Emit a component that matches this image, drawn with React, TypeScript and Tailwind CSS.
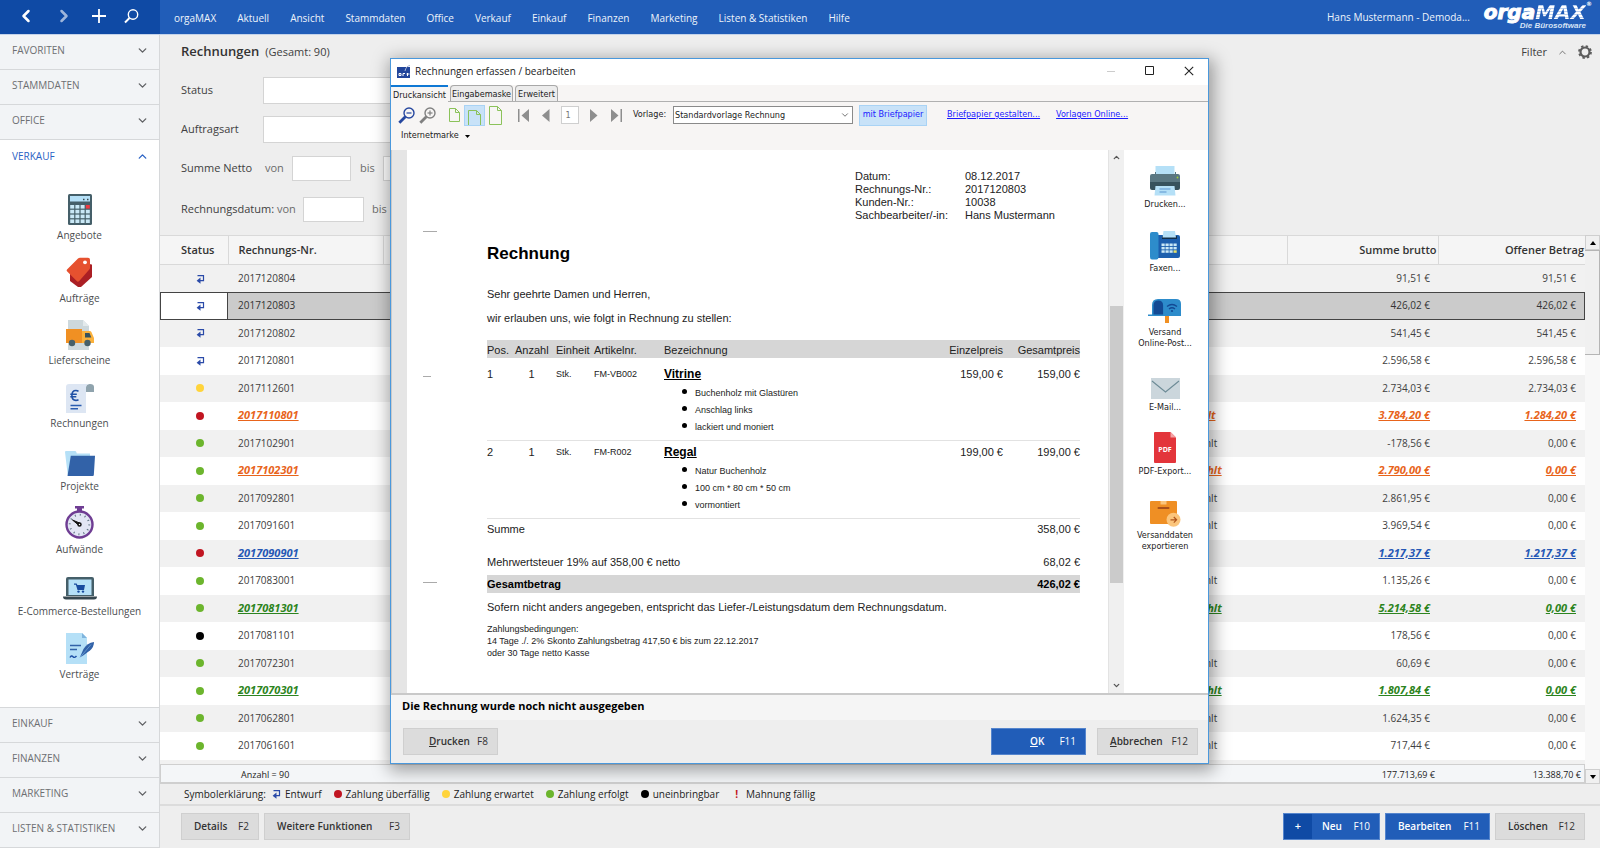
import type { ReactNode } from "react";
import { ChevronDown, ChevronLeft, ChevronRight, ChevronUp } from "lucide-react";

/* ---------- Sidebar icons ---------- */

const Calculator = () => (
  <svg width="24" height="31" viewBox="0 0 24 31" aria-hidden="true">
    <rect width="24" height="31" rx="1.5" fill="#455f69" />
    <rect x="2" y="2" width="20" height="5.500" fill="#b5e0f7" />
    <path d="M15 5.500h1.500M19 5.500h1.500" stroke="#37474f" strokeWidth="1.400" />
    {[11, 15.8, 20.6, 25.4].map((y, r) =>
      [2.2, 7.4, 12.6, 17.8].map((x, c) => (
        <rect key={x + "-" + y} x={x} y={y} width="4" height="3.600" fill={r === 0 && c === 3 ? "#ee3b43" : "#c9e8f6"} />
      )),
    )}
  </svg>
);

const Tag = () => (
  <svg width="27" height="31" viewBox="0 0 27 31" aria-hidden="true">
    <path d="M25 7l1 1v12L15 30h-3L4 24V17z" fill="#ab1f24" />
    <path d="M1 12.500L12 1.500q.8-.7 2-.7h8q2 0 2 2v8q0 1-.7 1.800L13 24.300q-1.200 1-2.300-.2L1 14.300q-.8-.9 0-1.800z" fill="#e6512f" />
    <circle cx="19" cy="5.300" r="1.900" fill="#fff" />
  </svg>
);

const Truck = () => (
  <svg width="28" height="30" viewBox="0 0 28 30" aria-hidden="true">
    <path d="M2 0h15l6 6v24H2z" fill="#cdd8dc" />
    <path d="M17 0l6 6h-6z" fill="#e3eaec" />
    <path d="M0 9h16v14H0z" fill="#f09023" />
    <path d="M16 11h7.500q1.500 0 2 1.300L28 18v5H16z" fill="#fbb13c" />
    <path d="M19 13h4.500l1.800 4.500H19z" fill="#37525d" />
    <circle cx="6" cy="23" r="3.200" fill="#455f69" />
    <circle cx="21.500" cy="23" r="3.200" fill="#455f69" />
  </svg>
);

const Invoice = () => (
  <svg width="28" height="29" viewBox="0 0 28 29" aria-hidden="true">
    <path d="M20 3q0-3 4-3t4 3v5h-8z" fill="#8fa3ad" />
    <path d="M3 0h20q-3 .5-3 4v25H0V3q0-3 3-3z" fill="#dde6f3" />
    <path d="M12.500 7.300q-1-.8-2.600-.8c-2.800 0-4 2.200-4 5s1.300 4.900 4 4.900q1.600 0 2.600-.8M4.300 10.300h6.500M4.300 12.800h6" fill="none" stroke="#1f50a5" strokeWidth="1.600" />
    <path d="M4.500 21.500h11M4.500 24.800h7.500" stroke="#2a5db0" strokeWidth="1.500" />
  </svg>
);

const Folder = () => (
  <svg width="30" height="25" viewBox="0 0 30 25" aria-hidden="true">
    <path d="M0 1q0-1 1-1h9q1 0 1.300 1l.5 1.500H25V8L5 24H3.500q-.8 0-.9-1z" fill="#b5e0f7" />
    <path d="M5.800 4.800H30L28.800 24q-.1 1-1 1H2.500z" fill="#3262a8" />
  </svg>
);

const Stopwatch = () => (
  <svg width="29" height="33" viewBox="0 0 29 33" aria-hidden="true">
    <path d="M10 0h9v2.500h-2V5h-5V2.500h-2z" fill="#6f3d93" />
    <circle cx="14.500" cy="18.500" r="13" fill="#e2e6f4" stroke="#6f3d93" strokeWidth="2.400" />
    <circle cx="14.500" cy="18.500" r="9.700" fill="none" stroke="#5e7380" strokeWidth="2" strokeDasharray="1 4.079" />
    <path d="M7.500 14l7.500 3.200-1.300 2z" fill="#111" stroke="#111" />
    <circle cx="14.500" cy="18.500" r="1.500" fill="#fff" stroke="#111" strokeWidth="1.500" />
  </svg>
);

const Laptop = () => (
  <svg width="34" height="24" viewBox="0 0 34 24" aria-hidden="true">
    <path d="M3 2q0-2 2-2h24q2 0 2 2v17H3z" fill="#455f69" />
    <rect x="5.500" y="2.500" width="23" height="15.500" fill="#b5e0f7" />
    <path d="M0 19.500h34q0 3-3 3H3q-3 0-3-3z" fill="#37474f" />
    <path d="M11 6.500h2.600l.8 1.500H22l-1 5h-6.500l-1.600-5.300H11z" fill="#174a9e" />
    <circle cx="15.500" cy="14.600" r="1.200" fill="#174a9e" />
    <circle cx="20" cy="14.600" r="1.200" fill="#174a9e" />
  </svg>
);

const Contract = () => (
  <svg width="29" height="31" viewBox="0 0 29 31" aria-hidden="true">
    <path d="M1 0h16l5 5v26H1z" fill="#b5e0f7" />
    <path d="M17 0l5 5h-5z" fill="#7fb4dd" />
    <path d="M5 12.500h11M5 16.500h7" stroke="#3262a8" strokeWidth="1.500" />
    <path d="M5 24.500q1.500-2.500 3-.8t3.500-.7" fill="none" stroke="#1f50a5" strokeWidth="1.400" />
    <path d="M15 24l3.500-8Q22 10 29 9q0 5-4 8.500L17.500 23z" fill="#3262a8" />
    <path d="M15 24.500L26 11.500" stroke="#6ea3d8" strokeWidth=".8" />
  </svg>
);

/* ---------- Action icons of the invoice window ---------- */

const Printer = () => (
  <svg width="30" height="30" viewBox="0 0 30 30" aria-hidden="true">
    <path d="M5.500 0h19v9h-19z" fill="#b5e0f7" />
    <path d="M2 8h3v-2h1v2h19V6h1v2h2q2 0 2 2v9H0v-9q0-2 2-2z" fill="#5a7782" />
    <path d="M0 16h30v6q0 2-2 2H2q-2 0-2-2z" fill="#37525d" />
    <circle cx="27.500" cy="11.500" r=".9" fill="#a4d233" />
    <path d="M5.500 20h19l1 9.500h-21z" fill="#b5e0f7" />
    <path d="M9.500 23h11M9.500 26h7" stroke="#5b93cf" strokeWidth="1.200" />
  </svg>
);

const Fax = () => (
  <svg width="30" height="29" viewBox="0 0 30 29" aria-hidden="true">
    <path d="M8 4h20q2 0 2 2v19q0 2-2 2H8z" fill="#1c5fae" />
    <path d="M0 3q0-2 2-2h4.500q2 0 2 2v23q0 2.500-2 2.500H2q-2 0-2-2.500z" fill="#2d8ccb" />
    <path d="M12 5h15v3H12z" fill="#123049" />
    <path d="M13.500 0h11.500l1 6.500H12.500z" fill="#b5e0f7" />
    {[12.5, 15.9, 19.3].map((y) =>
      [11.5, 15.5, 19.5, 23.5].map((x) => (
        <rect key={x + "-" + y} x={x} y={y} width="3.200" height="2.500" fill={y > 19 && x > 23 ? "#e8e36a" : "#c9e8f6"} />
      )),
    )}
  </svg>
);

const Mailbox = () => (
  <svg width="34" height="26" viewBox="0 0 34 26" aria-hidden="true">
    <path d="M17 16h4v9h-4z" fill="#f09023" />
    <path d="M10 1h18q5 0 5 5v12H10z" fill="#2d8ccb" />
    <path d="M4 7q0-6 6-6t6 6v11H4z" fill="#2d8ccb" />
    <path d="M5.500 7.500q0-5 4.800-5t4.800 5V17H5.500z" fill="#134a94" />
    <path d="M0 16.500h16V18H0z" fill="#2d8ccb" />
    <path d="M19 8.500q5-4 10 0M21 11q3-2.500 6 0" fill="none" stroke="#134a94" strokeWidth="1.300" />
    <circle cx="24" cy="13" r="1.100" fill="#134a94" />
  </svg>
);

const Envelope = () => (
  <svg width="29" height="21" viewBox="0 0 29 21" aria-hidden="true">
    <rect width="29" height="21" fill="#cbd6dc" />
    <path d="M1 3l13.500 11L28 3" fill="none" stroke="#6d8b96" strokeWidth="1.100" />
  </svg>
);

const Pdf = () => (
  <svg width="22" height="31" viewBox="0 0 22 31" aria-hidden="true">
    <path d="M1 0h15.500L22 5.500V30q0 1-1 1H1q-1 0-1-1V1q0-1 1-1z" fill="#e3353b" />
    <path d="M16.500 0L22 5.500h-5.500z" fill="#f4a3a5" />
    <text x="11" y="19.500" textAnchor="middle" fontSize="7" fontWeight="700" fontFamily="Open Sans, sans-serif" fill="#fff">PDF</text>
  </svg>
);

const Parcel = () => (
  <svg width="31" height="26" viewBox="0 0 31 26" aria-hidden="true">
    <rect width="27" height="23" rx="1" fill="#ef8f24" />
    <path d="M10.500 0h6v3.500h-6z" fill="#fbc57c" />
    <path d="M8.500 7h10" stroke="#a8501b" strokeWidth="2" strokeLinecap="round" />
    <circle cx="23.500" cy="18.800" r="7" fill="#fbc57c" />
    <path d="M20.500 18.800h6M23.800 16l2.800 2.800-2.800 2.800" fill="none" stroke="#b0551b" strokeWidth="1.200" />
  </svg>
);

/* ---------- Small glyphs ---------- */

const DraftGlyph = () => (
  <svg width="9" height="9" viewBox="0 0 9 9" className="inline-block" aria-label="Entwurf">
    <path d="M1.500 .6h6v5H4" fill="none" stroke="#2a4aa8" strokeWidth="1.200" />
    <path d="M4.500 2.600v6.200L.6 5.700z" fill="#2a4aa8" />
  </svg>
);

const Lens = ({ color, plus }: { color: string; plus?: boolean }) => (
  <svg width="17" height="17" viewBox="0 0 17 17" fill="none" stroke={color} aria-hidden="true">
    <circle cx="11" cy="6" r="5" strokeWidth="1.400" />
    <path d="M8.500 6h5" strokeWidth="1.200" />
    {plus && <path d="M11 3.500v5" strokeWidth="1.200" />}
    <path d="M7.300 9.700L1.300 15.700" strokeWidth="2.800" />
  </svg>
);

const Sheet = ({ w, h }: { w: number; h: number }) => (
  <svg width={w} height={h} viewBox={"0 0 " + w + " " + h} fill="none" stroke="#8bc25a" className="shrink-0" aria-hidden="true">
    <path d={"M.5 .5H" + (w - 4.5) + "L" + (w - 0.5) + " 4.500V" + (h - 0.5) + "H.5zM" + (w - 4.5) + " .5v4h4"} />
  </svg>
);

const dotColors = {
  yellow: "bg-[#ffd43b]",
  red: "bg-[#c11521]",
  green: "bg-[#6cb52d]",
  black: "bg-black",
};

type Mark = keyof typeof dotColors | "draft";

const StatusMark = ({ mark }: { mark: Mark }) =>
  mark === "draft" ? <DraftGlyph /> : <span className={"inline-block size-2 rounded-full " + dotColors[mark]} />;

/* ---------- Data ---------- */

const menu = ["orgaMAX", "Aktuell", "Ansicht", "Stammdaten", "Office", "Verkauf", "Einkauf", "Finanzen", "Marketing", "Listen & Statistiken", "Hilfe"];

const salesItems: [string, ReactNode][] = [
  ["Angebote", <Calculator />],
  ["Aufträge", <Tag />],
  ["Lieferscheine", <Truck />],
  ["Rechnungen", <Invoice />],
  ["Projekte", <Folder />],
  ["Aufwände", <Stopwatch />],
  ["E-Commerce-Bestellungen", <Laptop />],
  ["Verträge", <Contract />],
];

type Row = { mark: Mark; nr: string; state?: string; gross: string; open: string; tone?: keyof typeof tones };

const tones = {
  orange: "text-[11px] font-bold italic underline text-[#e8641b]",
  blue: "text-[11px] font-bold italic underline text-[#2557b5]",
  green: "text-[11px] font-bold italic underline text-[#2c8420]",
};

const rows: Row[] = [
  { mark: "draft", nr: "2017120804", gross: "91,51 €", open: "91,51 €" },
  { mark: "draft", nr: "2017120803", gross: "426,02 €", open: "426,02 €" },
  { mark: "draft", nr: "2017120802", gross: "541,45 €", open: "541,45 €" },
  { mark: "draft", nr: "2017120801", gross: "2.596,58 €", open: "2.596,58 €" },
  { mark: "yellow", nr: "2017112601", gross: "2.734,03 €", open: "2.734,03 €" },
  { mark: "red", nr: "2017110801", state: "erteilt", gross: "3.784,20 €", open: "1.284,20 €", tone: "orange" },
  { mark: "green", nr: "2017102901", state: "bezahlt", gross: "-178,56 €", open: "0,00 €" },
  { mark: "green", nr: "2017102301", state: "bezahlt", gross: "2.790,00 €", open: "0,00 €", tone: "orange" },
  { mark: "green", nr: "2017092801", state: "bezahlt", gross: "2.861,95 €", open: "0,00 €" },
  { mark: "green", nr: "2017091601", state: "bezahlt", gross: "3.969,54 €", open: "0,00 €" },
  { mark: "red", nr: "2017090901", gross: "1.217,37 €", open: "1.217,37 €", tone: "blue" },
  { mark: "green", nr: "2017083001", state: "bezahlt", gross: "1.135,26 €", open: "0,00 €" },
  { mark: "green", nr: "2017081301", state: "bezahlt", gross: "5.214,58 €", open: "0,00 €", tone: "green" },
  { mark: "black", nr: "2017081101", gross: "178,56 €", open: "0,00 €" },
  { mark: "green", nr: "2017072301", state: "bezahlt", gross: "60,69 €", open: "0,00 €" },
  { mark: "green", nr: "2017070301", state: "bezahlt", gross: "1.807,84 €", open: "0,00 €", tone: "green" },
  { mark: "green", nr: "2017062801", state: "bezahlt", gross: "1.624,35 €", open: "0,00 €" },
  { mark: "green", nr: "2017061601", state: "bezahlt", gross: "717,44 €", open: "0,00 €" },
];

const legend: [Mark, string][] = [
  ["draft", "Entwurf"],
  ["red", "Zahlung überfällig"],
  ["yellow", "Zahlung erwartet"],
  ["green", "Zahlung erfolgt"],
  ["black", "uneinbringbar"],
];

const positions = [
  { pos: 1, article: "FM-VB002", name: "Vitrine", details: ["Buchenholz mit Glastüren", "Anschlag links", "lackiert und moniert"], price: "159,00 €" },
  { pos: 2, article: "FM-R002", name: "Regal", details: ["Natur Buchenholz", "100 cm * 80 cm * 50 cm", "vormontiert"], price: "199,00 €" },
];

const actions: [string[], ReactNode][] = [
  [["Drucken..."], <Printer />],
  [["Faxen..."], <Fax />],
  [["Versand", "Online-Post..."], <Mailbox />],
  [["E-Mail..."], <Envelope />],
  [["PDF-Export..."], <Pdf />],
  [["Versanddaten", "exportieren"], <Parcel />],
];

/* ---------- Sidebar ---------- */

const SectionButton = ({ label }: { label: string }) => (
  <button className="flex h-[35px] w-full shrink-0 items-center justify-between border-b border-[#d6d8da] bg-[#f2f4f6] pr-2.5 pb-[3px] pl-3 text-[10px] font-medium text-[#6d6f72]">
    {label}
    <ChevronDown size={13} strokeWidth={2.5} className="text-[#5f6164]" />
  </button>
);

const Sidebar = () => (
  <aside className="flex w-40 shrink-0 flex-col border-r border-[#d6d8da] bg-white">
    {["FAVORITEN", "STAMMDATEN", "OFFICE"].map((s) => (
      <SectionButton key={s} label={s} />
    ))}
    <button className="flex h-[35px] w-full shrink-0 items-center justify-between pr-2.5 pb-[3px] pl-3 text-[10px] font-medium text-[#2a62c4]">
      VERKAUF
      <ChevronUp size={13} strokeWidth={2.5} />
    </button>
    <nav className="flex min-h-0 flex-1 flex-col border-b border-[#d6d8da] pt-[9px] pb-[21px]">
      {salesItems.map(([label, icon]) => (
        <a key={label} href="#" className="flex min-h-0 flex-1 flex-col items-center justify-end pb-1 text-[10px] leading-4 text-[#4c4e51]">
          <span className="mb-0.5 flex items-end">{icon}</span>
          {label}
        </a>
      ))}
    </nav>
    {["EINKAUF", "FINANZEN", "MARKETING", "LISTEN & STATISTIKEN"].map((s) => (
      <SectionButton key={s} label={s} />
    ))}
  </aside>
);

/* ---------- Header ---------- */

const Header = () => (
  <header className="flex h-[34px] shrink-0 bg-[#215db8] text-white">
    <div className="flex w-40 shrink-0 items-center justify-between bg-[#0f4aa5] pr-[21px] pb-0.5 pl-4">
      <button aria-label="Zurück"><ChevronLeft size={20} strokeWidth={3} /></button>
      <button aria-label="Vor"><ChevronRight size={20} strokeWidth={3} className="opacity-60" /></button>
      <button aria-label="Neu">
        <svg width="14" height="14" viewBox="0 0 14 14" stroke="#fff" strokeWidth="1.800"><path d="M7 0v14M0 7h14" /></svg>
      </button>
      <button aria-label="Suchen">
        <svg width="15" height="15" viewBox="0 0 15 15" fill="none" stroke="#fff">
          <circle cx="9" cy="5.500" r="4.700" strokeWidth="1.400" />
          <path d="M5.500 9L1 13.500" strokeWidth="2" />
        </svg>
      </button>
    </div>
    <nav className="flex flex-1 items-center gap-[21px] pt-[3px] pl-[14px] text-[10px] whitespace-nowrap text-[#eef4fb]">
      {menu.map((m) => (
        <a key={m} href="#">{m}</a>
      ))}
    </nav>
    <div className="flex items-center pr-2">
      <span className="pr-[14px] text-[10px] text-[#eef4fb]">Hans Mustermann - Demoda...</span>
      <div className="flex flex-col items-end font-['DejaVu_Sans',sans-serif]">
        <span className="flex text-[20px] leading-[18px] font-bold italic">
          <span className="[-webkit-text-stroke:1px_white]">orga</span>
          <span className="bg-[repeating-linear-gradient(180deg,#ffffff_0px,#ffffff_2px,#b9cfee_2px,#b9cfee_3px)] bg-clip-text text-transparent">MAX</span>
          <sup className="text-[6px] leading-[8px]">®</sup>
        </span>
        <span className="pr-1.5 font-['Liberation_Sans',sans-serif] text-[8px] leading-[10px] font-bold text-[#d5e2f5] italic">Die Bürosoftware</span>
      </div>
    </div>
  </header>
);

/* ---------- Invoice list ---------- */

const fieldClass = "border border-[#d4d4d4] bg-white px-1 text-[10px]";

const Filters = () => (
  <section className="shrink-0 pb-[13px] pl-[21px] text-[11px] text-[#404040]">
    <div className="flex h-[42px] items-center pr-2 pb-2">
      <h1 className="text-[13px] font-semibold text-[#333]">Rechnungen</h1>
      <span className="pl-1.5">(Gesamt: 90)</span>
      <button className="ml-auto flex items-center gap-2.5">
        Filter
        <ChevronUp size={11} strokeWidth={1.5} />
      </button>
      <button className="ml-2.5" aria-label="Einstellungen">
        <svg width="14" height="14" viewBox="0 0 14 14" fill="none" stroke="#5c5c5c">
          <circle cx="7" cy="7" r="4.500" strokeWidth="2.200" />
          <circle cx="7" cy="7" r="6" strokeWidth="1.800" strokeDasharray="2.400 2.312" />
        </svg>
      </button>
    </div>
    <div className="flex items-center">
      <label htmlFor="status" className="w-[82px]">Status</label>
      <input id="status" className={fieldClass + " h-[27px] w-[240px]"} />
    </div>
    <div className="mt-3 flex items-center">
      <label htmlFor="kind" className="w-[82px]">Auftragsart</label>
      <input id="kind" className={fieldClass + " h-[27px] w-[240px]"} />
    </div>
    <div className="mt-[13px] flex items-center">
      <span className="w-[84px]">Summe Netto</span>
      <label htmlFor="net-from" className="w-[27px] text-[#6b6b6b]">von</label>
      <input id="net-from" className={fieldClass + " h-[25px] w-[59px]"} />
      <label htmlFor="net-to" className="w-[32px] pl-[9px] text-[#6b6b6b]">bis</label>
      <input id="net-to" className={fieldClass + " h-[25px] w-[59px]"} />
    </div>
    <div className="mt-4 flex items-center">
      <span className="w-[96px]">Rechnungsdatum:</span>
      <label htmlFor="date-from" className="w-[26px] text-[#6b6b6b]">von</label>
      <input id="date-from" className={fieldClass + " h-[25px] w-[61px]"} />
      <label htmlFor="date-to" className="w-[32px] pl-2 text-[#6b6b6b]">bis</label>
      <input id="date-to" className={fieldClass + " h-[25px] w-[61px]"} />
    </div>
  </section>
);

const InvoiceTable = () => (
  <div className="flex min-h-0 flex-1">
    <div className="flex min-w-0 flex-1 flex-col">
      <div className="min-h-0 flex-1 overflow-hidden bg-[#f1f1f1]">
        <table className="w-full table-fixed border-collapse text-[10px] text-[#404040]">
          <colgroup>
            <col className="w-[68px]" />
            <col className="w-[155px]" />
            <col />
            <col className="w-[104px]" />
            <col className="w-[151px]" />
            <col className="w-[147px]" />
          </colgroup>
          <thead>
            <tr className="h-[29px] border-y border-[#d9d9d9] bg-[#f5f5f5] text-[11px] text-[#333]">
              <th className="border-r border-[#d9d9d9] pl-2 font-semibold">Status</th>
              <th className="border-r border-[#d9d9d9] pl-2.5 text-left font-semibold">Rechnungs-Nr.</th>
              <th />
              <th className="border-r border-[#d9d9d9]" />
              <th className="border-r border-[#d9d9d9] pr-px text-right font-semibold">Summe brutto</th>
              <th className="pr-px text-right font-semibold">Offener Betrag</th>
            </tr>
          </thead>
          <tbody>
            {rows.map((r, i) => {
              const tone = r.tone ? tones[r.tone] : "";
              const selected = i === 1;
              return (
                <tr
                  key={r.nr}
                  className={
                    "odd:h-[27px] even:h-[28px] " +
                    (selected ? "bg-[#cbcbcb] text-[#333] outline outline-1 -outline-offset-1 outline-[#444]" : "odd:bg-[#f1f1f1] even:bg-white")
                  }
                >
                  <td className={"pl-3 text-center leading-none " + (selected ? "bg-white outline outline-1 -outline-offset-1 outline-[#444]" : "")}>
                    <StatusMark mark={r.mark} />
                  </td>
                  <td className={"pl-2.5 " + tone}>{r.nr}</td>
                  <td />
                  <td className={tone}>{r.state}</td>
                  <td className={"pr-2 text-right " + tone}>{r.gross}</td>
                  <td className={"pr-[9px] text-right " + tone}>{r.open}</td>
                </tr>
              );
            })}
          </tbody>
        </table>
      </div>
      <div className="flex h-5 shrink-0 items-center border border-b-2 border-[#cfcfcf] bg-[#f4f6f8] pt-0.5 text-[9px] text-[#222]">
        <span className="flex-1 pl-20">Anzahl = 90</span>
        <span className="w-[148px] text-right">177.713,69 €</span>
        <span className="w-[149px] pr-[3px] text-right">13.388,70 €</span>
      </div>
    </div>
    <div className="flex w-[15px] shrink-0 flex-col bg-[#f8f8f8]">
      <button aria-label="Nach oben" className="flex h-[15px] items-center justify-center border border-[#cfcfcf] bg-[#f0f0f0]">
        <svg width="6" height="4" viewBox="0 0 6 4"><path d="M3 0l3 4H0z" /></svg>
      </button>
      <div className="h-[105px] border border-l-0 border-[#b5b5b5] bg-[#f0f0f0]" />
      <button aria-label="Nach unten" className="mt-auto flex h-[15px] items-center justify-center border border-[#cfcfcf] bg-[#f0f0f0]">
        <svg width="6" height="4" viewBox="0 0 6 4"><path d="M3 4l3-4H0z" /></svg>
      </button>
    </div>
  </div>
);

const Legend = () => (
  <div className="flex h-[22px] shrink-0 items-center border-b-2 border-[#dcdcdc] pl-6 text-[10px] text-[#222]">
    <span className="w-[88px]">Symbolerklärung:</span>
    {legend.map(([mark, label]) => (
      <span key={label} className="mr-3 flex items-center gap-1">
        <StatusMark mark={mark} />
        {label}
      </span>
    ))}
    <span className="flex items-center gap-2 pl-1">
      <b className="text-[#c11521]">!</b>Mahnung fällig
    </span>
  </div>
);

const buttonBase = "flex h-[27px] items-center justify-between border pr-[9px] pl-3 text-[10px] font-semibold whitespace-nowrap";
const grayButton = buttonBase + " border-[#cfcfcf] bg-[#dcdcdc] text-[#333]";
const blueButton = buttonBase + " border-[#5585cd] bg-[#215db8] text-white";

const Key = ({ children }: { children: string }) => <span className="font-normal">{children}</span>;

const ButtonBar = () => (
  <div className="flex h-[42px] shrink-0 items-center gap-[5px] pr-[15px] pb-0.5 pl-[21px]">
    <button className={grayButton + " w-[78px]"}>Details<Key>F2</Key></button>
    <button className={grayButton + " w-[146px]"}>Weitere Funktionen<Key>F3</Key></button>
    <button className="ml-auto flex h-[27px] w-[97px] border border-[#5585cd] bg-[#215db8] text-[10px] font-semibold text-white">
      <span className="flex w-7 items-center justify-center self-stretch bg-[#0f4aa5] text-[11px]">+</span>
      <span className="flex flex-1 items-center justify-between self-stretch pr-[9px] pl-2.5">Neu<Key>F10</Key></span>
    </button>
    <button className={blueButton + " w-[105px]"}>Bearbeiten<Key>F11</Key></button>
    <button className={grayButton + " w-[90px]"}>Löschen<Key>F12</Key></button>
  </div>
);

/* ---------- Invoice window ---------- */

const iconButton = "flex items-center justify-center";

const Toolbar = () => (
  <div className="shrink-0 bg-[#f7f5f4] pt-0.5 pr-1.5 pb-1 pl-[5px] font-['DejaVu_Sans_Condensed','DejaVu_Sans',sans-serif] text-[9px] text-[#222]">
    <div className="flex h-[22px] items-center whitespace-nowrap">
      <button aria-label="Verkleinern" className={iconButton + " w-[21px]"}><Lens color="#26479f" /></button>
      <button aria-label="Vergrößern" className={iconButton + " w-[21px]"}><Lens color="#808080" plus /></button>
      <button aria-label="Seitenbreite" className={iconButton + " ml-1.5 w-5"}><Sheet w={11} h={14} /></button>
      <button aria-label="Ganze Seite" className="flex h-[21px] w-[21px] items-start justify-center overflow-hidden border border-[#a9d3f5] bg-[#c8e2f8] pt-1"><Sheet w={13} h={20} /></button>
      <button aria-label="Originalgröße" className={iconButton + " w-[21px]"}><Sheet w={13} h={19} /></button>
      <button aria-label="Erste Seite" className={iconButton + " ml-1.5 w-[22px]"}>
        <svg width="11" height="13" viewBox="0 0 11 13" fill="#8e8e8e"><path d="M0 0h1.500v13H0zM11 0v13L3.500 6.500z" /></svg>
      </button>
      <button aria-label="Vorige Seite" className={iconButton + " w-[23px]"}>
        <svg width="8" height="13" viewBox="0 0 8 13" fill="#8e8e8e"><path d="M7.500 0v13L0 6.500z" /></svg>
      </button>
      <input aria-label="Seite" defaultValue="1" className="mx-1 h-[18px] w-[18px] border border-[#cfcfcf] bg-white pr-1 text-center text-[9px] text-[#777]" />
      <button aria-label="Nächste Seite" className={iconButton + " w-[22px]"}>
        <svg width="8" height="13" viewBox="0 0 8 13" fill="#8e8e8e"><path d="M0 0v13l7.500-6.500z" /></svg>
      </button>
      <button aria-label="Letzte Seite" className={iconButton + " w-[22px]"}>
        <svg width="11" height="13" viewBox="0 0 11 13" fill="#8e8e8e"><path d="M9.500 0H11v13H9.500zM0 0v13l7.500-6.500z" /></svg>
      </button>
      <label htmlFor="template" className="w-[46px] pl-1.5">Vorlage:</label>
      <span className="relative flex h-[18px] w-[180px] border border-[#8a8a8a] bg-white">
        <select id="template" className="w-full appearance-none pl-px text-[9px] leading-4 outline-none">
          <option>Standardvorlage Rechnung</option>
        </select>
        <ChevronDown size={10} strokeWidth={1.8} className="pointer-events-none absolute top-[3px] right-0.5 text-[#444]" />
      </span>
      <button className="mx-1.5 h-[21px] w-[68px] border border-[#a9d3f5] bg-[#c8e2f8] text-[#1a1aff]">mit Briefpapier</button>
      <a href="#" className="pl-3.5 text-[#1a1aff] underline">Briefpapier gestalten...</a>
      <a href="#" className="pl-4 text-[#1a1aff] underline">Vorlagen Online...</a>
    </div>
    <button className="flex h-[20px] items-center gap-1.5 pl-[5px]">
      Internetmarke
      <svg width="5" height="3" viewBox="0 0 5 3"><path d="M0 0h5L2.500 3z" /></svg>
    </button>
  </div>
);

const Paper = () => (
  <div className="relative min-w-0 flex-1 overflow-hidden border-r border-[#e3e3e3] bg-white pr-[28px] pl-20 font-['Liberation_Sans',sans-serif] text-[11px] leading-[13px] text-[#222]">
    <span className="absolute top-[81px] left-4 h-px w-3.5 bg-[#aaa]" />
    <span className="absolute top-[226px] left-4 h-px w-2 bg-[#aaa]" />
    <span className="absolute top-[432px] left-4 h-px w-3.5 bg-[#aaa]" />
    <dl className="ml-auto grid w-[225px] grid-cols-[110px_1fr] pt-5">
      <dt>Datum:</dt><dd>08.12.2017</dd>
      <dt>Rechnungs-Nr.:</dt><dd>2017120803</dd>
      <dt>Kunden-Nr.:</dt><dd>10038</dd>
      <dt>Sachbearbeiter/-in:</dt><dd>Hans Mustermann</dd>
    </dl>
    <h2 className="pt-[22px] text-[17px] leading-5 font-bold text-black">Rechnung</h2>
    <p className="pt-[24px]">Sehr geehrte Damen und Herren,</p>
    <p className="pt-[11px]">wir erlauben uns, wie folgt in Rechnung zu stellen:</p>
    <table className="mt-[15px] w-full table-fixed border-collapse">
      <colgroup>
        <col className="w-[28px]" />
        <col className="w-[41px]" />
        <col className="w-[38px]" />
        <col className="w-[70px]" />
        <col />
        <col className="w-[80px]" />
        <col className="w-[77px]" />
      </colgroup>
      <thead>
        <tr className="h-[18px] bg-[#d6d6d6] text-left [&>th]:pt-[3px] [&>th]:font-normal">
          <th>Pos.</th>
          <th>Anzahl</th>
          <th>Einheit</th>
          <th>Artikelnr.</th>
          <th>Bezeichnung</th>
          <th className="text-right">Einzelpreis</th>
          <th className="text-right">Gesamtpreis</th>
        </tr>
      </thead>
      <tbody>
        {positions.map((p) => (
          <tr key={p.pos} className="border-b border-[#e2e2e2] align-top [&>td]:pt-[5px] first:[&>td]:pt-[10px]">
            <td>{p.pos}</td>
            <td className="pr-2 text-center">1</td>
            <td className="text-[9px] leading-3">Stk.</td>
            <td className="text-[9px] leading-3">{p.article}</td>
            <td className="pb-1">
              <span className="text-[12px] font-bold text-black underline">{p.name}</span>
              <ul className="pt-1 text-[9px] leading-[17px]">
                {p.details.map((d) => (
                  <li key={d} className="flex items-center gap-2 pl-[18px]">
                    <span className="mb-1 size-[5px] rounded-full bg-black" />
                    {d}
                  </li>
                ))}
              </ul>
            </td>
            <td className="text-right">{p.price}</td>
            <td className="text-right">{p.price}</td>
          </tr>
        ))}
      </tbody>
    </table>
    <div className="flex justify-between pt-1"><span>Summe</span><span>358,00 €</span></div>
    <div className="flex justify-between pt-5 pb-1.5"><span>Mehrwertsteuer 19% auf 358,00 € netto</span><span>68,02 €</span></div>
    <div className="flex h-[18px] items-center justify-between bg-[#d6d6d6] font-bold text-black"><span>Gesamtbetrag</span><span>426,02 €</span></div>
    <p className="pt-2">Sofern nicht anders angegeben, entspricht das Liefer-/Leistungsdatum dem Rechnungsdatum.</p>
    <p className="pt-[9px] text-[9px] leading-3">
      Zahlungsbedingungen:<br />
      14 Tage ./. 2% Skonto Zahlungsbetrag 417,50 € bis zum 22.12.2017<br />
      oder 30 Tage netto Kasse
    </p>
  </div>
);

const InvoiceWindow = () => (
  <div role="dialog" aria-label="Rechnungen erfassen / bearbeiten" className="absolute top-[58px] right-[391px] bottom-[84px] left-[390px] flex flex-col border border-[#4a98dc] bg-[#eeeeee] shadow-[2px_4px_16px_3px_rgba(0,0,0,0.35)]">
    <div className="flex h-[26px] shrink-0 items-center bg-white pr-[14px] pb-0.5 pl-1.5 text-[10px] text-[#222]">
      <svg width="14" height="13" viewBox="0 0 14 13" aria-hidden="true">
        <rect y="2" width="13" height="11" fill="#21459b" />
        <path d="M8 6q1-5 5-5.500" stroke="#a9b6d6" fill="none" />
        <path d="M2 8.500h2v2H2zM6 11V8.500h2M10.500 8v3M9.500 9h3" stroke="#fff" fill="none" />
      </svg>
      <span className="pl-1">Rechnungen erfassen / bearbeiten</span>
      <span className="ml-auto flex items-center gap-[29px]">
        <button aria-label="Minimieren"><svg width="10" height="10" viewBox="0 0 10 10" stroke="#ccc"><path d="M1 5.500h8" /></svg></button>
        <button aria-label="Maximieren"><svg width="10" height="10" viewBox="0 0 10 10" fill="none" stroke="#222"><path d="M.5 .5h8v8h-8z" /></svg></button>
        <button aria-label="Schließen"><svg width="10" height="10" viewBox="0 0 10 10" stroke="#222" strokeWidth="1.100"><path d="M.8 .8l8.400 8.400M9.200 .8L.8 9.200" /></svg></button>
      </span>
    </div>
    <div role="tablist" className="flex h-[17px] shrink-0 gap-0.5 border-b border-[#b0b0b0] bg-[#f7f5f4] font-['DejaVu_Sans_Condensed','DejaVu_Sans',sans-serif] text-[9px] leading-[14px] text-[#222]">
      <button role="tab" aria-selected="true" className="-mb-px w-[57px] border-t-2 border-[#0f78d4] bg-[#f7f5f4] whitespace-nowrap">Druckansicht</button>
      <button role="tab" className="w-[63px] rounded-t border border-b-0 border-[#a8a8a8] bg-[#ececec] whitespace-nowrap">Eingabemaske</button>
      <button role="tab" className="w-[43px] rounded-t border border-b-0 border-[#a8a8a8] bg-[#ececec]">Erweitert</button>
    </div>
    <Toolbar />
    <div className="flex min-h-0 flex-1 border-b-2 border-[#c9c9c9] bg-white">
      <div className="w-4 shrink-0 border-l border-[#c9c9c9] bg-[#e5e5e5]" />
      <Paper />
      <div className="flex w-[15px] shrink-0 flex-col items-center bg-[#f0f0f0] px-px">
        <ChevronUp size={9} strokeWidth={3.5} className="mt-[3px] text-[#555]" />
        <div className="mt-[144px] h-[277px] w-full bg-[#cbcbcb]" />
        <ChevronDown size={9} strokeWidth={3.5} className="mt-auto mb-[3px] text-[#555]" />
      </div>
      <div className="flex w-[84px] shrink-0 flex-col pt-[11px] pr-0.5 font-['DejaVu_Sans_Condensed','DejaVu_Sans',sans-serif] text-[9px] leading-[11px] text-[#222]">
        {actions.map(([lines, icon]) => (
          <button key={lines[0]} className="pb-[15px]">
            <span className="mb-[3px] flex h-[35px] items-end justify-center">{icon}</span>
            {lines.map((l) => (
              <span key={l} className="block">{l}</span>
            ))}
          </button>
        ))}
      </div>
    </div>
    <div className="flex h-[25px] shrink-0 items-center bg-[#f5f5f5] pb-0.5 pl-[11px] text-[11px] font-bold text-black">Die Rechnung wurde noch nicht ausgegeben</div>
    <div className="flex h-[43px] shrink-0 items-center gap-[11px] pr-2.5 pl-3">
      <button className={grayButton + " w-[95px]"}><span className="pl-[13px]"><u>D</u>rucken</span><Key>F8</Key></button>
      <button className={blueButton + " ml-auto w-[95px]"}><span className="pl-[26px]"><u>O</u>K</span><Key>F11</Key></button>
      <button className={grayButton + " w-[101px]"}><span><u>A</u>bbrechen</span><Key>F12</Key></button>
    </div>
  </div>
);

export default function App() {
  return (
    <div className="relative flex h-screen w-full flex-col overflow-hidden bg-[#eeeeee] font-['Open_Sans','Noto_Sans',sans-serif]">
      <Header />
      <div className="flex min-h-0 flex-1 border-t border-[#c4d3ea]">
        <Sidebar />
        <main className="flex min-w-0 flex-1 flex-col">
          <Filters />
          <InvoiceTable />
          <Legend />
          <ButtonBar />
        </main>
      </div>
      <InvoiceWindow />
    </div>
  );
}
